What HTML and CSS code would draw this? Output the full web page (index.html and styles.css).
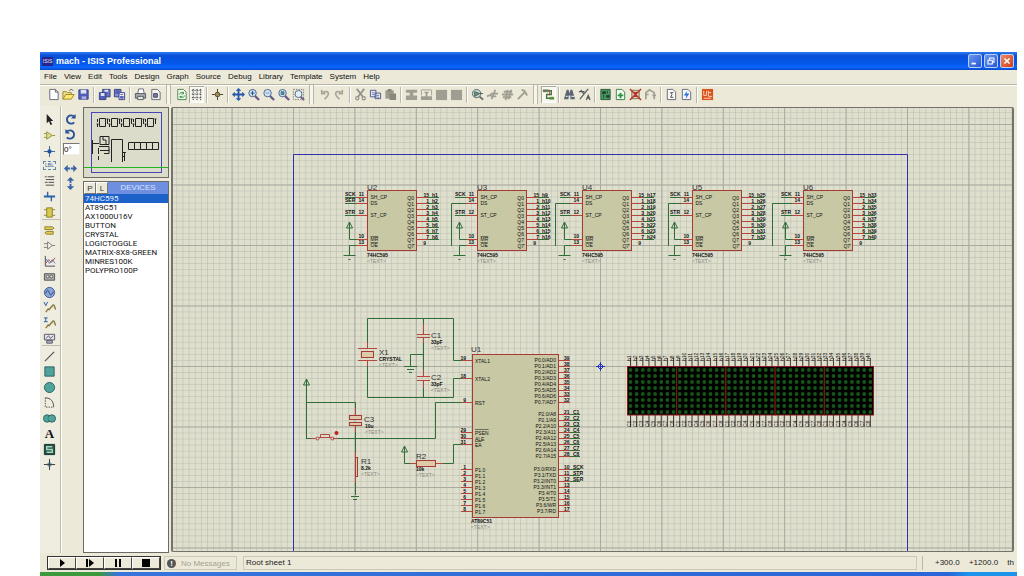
FILE: index.html
```html
<!DOCTYPE html>
<html lang="en">
<head>
<meta charset="utf-8">
<title>mach - ISIS Professional</title>
<link rel="stylesheet" href="styles.css">
</head>
<body>
<div class="window">
  <header class="titlebar">
    <span class="app-icon">ISIS</span>
    <h1 class="title">mach - ISIS Professional</h1>
    <button class="win-btn" aria-label="Minimize"><svg viewBox="0 0 14 14"><path d="M3 10h5" stroke="#fff" stroke-width="2"/></svg></button>
    <button class="win-btn" aria-label="Restore"><svg viewBox="0 0 14 14"><path d="M5.500 5.500V3.500h5v5h-2M3.500 6h5v4.500h-5z" fill="none" stroke="#fff" stroke-width="1.200"/></svg></button>
    <button class="win-btn win-close" aria-label="Close"><svg viewBox="0 0 14 14"><path d="M4 4l6 6M10 4l-6 6" stroke="#fff" stroke-width="1.800"/></svg></button>
  </header>
  <nav class="menubar">
    <a href="#">File</a><a href="#">View</a><a href="#">Edit</a><a href="#">Tools</a><a href="#">Design</a><a href="#">Graph</a><a href="#">Source</a><a href="#">Debug</a><a href="#">Library</a><a href="#">Template</a><a href="#">System</a><a href="#">Help</a>
  </nav>
  <div class="toolbar">
    <button aria-label="New"><svg viewBox="0 0 14 14"><path d="M3 1.500h6l3 3v8H3z" fill="#fff" stroke="#667"/><path d="M9 1.500v3h3" fill="none" stroke="#667"/></svg></button>
    <button aria-label="Open"><svg viewBox="0 0 14 14"><path d="M1 12V4h4l1 1h4v2" fill="#f3e08a" stroke="#9a8430"/><path d="M1 12l3-5h9l-3 5z" fill="#ffe76e" stroke="#9a8430"/><path d="M8 3c1-2 3-2 4 0" fill="none" stroke="#555"/></svg></button>
    <button aria-label="Save"><svg viewBox="0 0 14 14"><path d="M2 2h10v10H2z" fill="#5360b8" stroke="#353f86"/><path d="M4 2h6v4H4z" fill="#dde2f4"/><path d="M5 9h5v3H5z" fill="#aab2dc"/></svg></button>
    <i class="sep"></i>
    <button aria-label="Import"><svg viewBox="0 0 14 14"><path d="M5 1.500h8v8H5z" fill="#6874c2" stroke="#353f86"/><path d="M1.500 5h7v7.500h-7z" fill="#5360b8" stroke="#353f86"/><path d="M3 5.500h4v3H3zM7 2h4v2H7z" fill="#dde2f4"/></svg></button>
    <button aria-label="Export"><svg viewBox="0 0 14 14"><path d="M1.500 1.500h7v8h-7z" fill="#8791d2" stroke="#353f86"/><path d="M6.500 5h6v7.500h-6z" fill="#fff" stroke="#353f86"/><path d="M3 3h4v3H3zM8 7h3M8 9h3v2H8z" fill="#5360b8" stroke="#5360b8"/></svg></button>
    <i class="sep"></i>
    <button aria-label="Print"><svg viewBox="0 0 14 14"><path d="M4 6l1-5h5l1 5" fill="#fff" stroke="#667"/><path d="M1.500 6h11v5h-11z" fill="#a5aaa8" stroke="#556"/><path d="M4 9h6v3.500H4z" fill="#dff0dd" stroke="#556"/></svg></button>
    <button aria-label="Print area"><svg viewBox="0 0 14 14"><path d="M3 1.500h6l3 3v8H3z" fill="#f4f4ee" stroke="#667"/><path d="M5 6h4v4H5z" fill="#7580aa" stroke="#445"/></svg></button>
    <i class="gripsep"></i>
    <button aria-label="Redraw"><svg viewBox="0 0 14 14"><path d="M3 1.500h6l3 3v8H3z" fill="#f8fff5" stroke="#4d7c50"/><path d="M5 7c0-3 4-3 4-1M10 8c0 3-4 3-4.500 1M9 4v2.500H7M5.500 11V9H8" fill="none" stroke="#2b8d3a"/></svg></button>
    <button class="pressed" aria-label="Grid"><svg viewBox="0 0 14 14"><path d="M2 2.500h11M2 6.500h11M2 10.500h11M3.500 1v12M7.500 1v12M11.500 1v12" stroke="#333" stroke-dasharray="1.500 1.200"/></svg></button>
    <i class="sep"></i>
    <button aria-label="Origin"><svg viewBox="0 0 14 14"><path d="M7 1v12M1 7h12" stroke="#40382a"/><circle cx="7" cy="7" r="2.500" fill="#9c8a50" stroke="#5c5130"/></svg></button>
    <i class="sep"></i>
    <button aria-label="Pan"><svg viewBox="0 0 14 14"><path d="M7 0l3 3H8v3h3V4l3 3-3 3V8H8v3h2l-3 3-3-3h2V8H3v2L0 7l3-3v2h3V3H4z" fill="#2459ad"/></svg></button>
    <button aria-label="Zoom in"><svg viewBox="0 0 14 14"><path d="M8.500 8.500L13 13" stroke="#6d5a86" stroke-width="2.400"/><circle cx="6" cy="5.500" r="4" fill="#cbe3f2" stroke="#4c6190"/><path d="M6 3v5M4 5.500h4" stroke="#24427c"/></svg></button>
    <button aria-label="Zoom out"><svg viewBox="0 0 14 14"><path d="M8.500 8.500L13 13" stroke="#6d5a86" stroke-width="2.400"/><circle cx="6" cy="5.500" r="4" fill="#cbe3f2" stroke="#4c6190"/><path d="M4 5.500h4" stroke="#8298b8"/></svg></button>
    <button aria-label="Zoom all"><svg viewBox="0 0 14 14"><path d="M8.500 8.500L13 13" stroke="#6d5a86" stroke-width="2.400"/><circle cx="6" cy="5.500" r="4" fill="#cbe3f2" stroke="#4c6190"/><path d="M4.500 4h3v3h-3z" fill="#5a92a0" stroke="#44707c"/></svg></button>
    <button aria-label="Zoom area"><svg viewBox="0 0 14 14"><path d="M1.500 1.500h11v11h-11z" fill="none" stroke="#777" stroke-dasharray="1.500 1.200"/><path d="M9 9l4 4" stroke="#6d5a86" stroke-width="2.200"/><circle cx="7" cy="6.500" r="3.800" fill="#e5f0f6" stroke="#4c6190"/></svg></button>
    <i class="gripsep"></i>
    <button aria-label="Undo"><svg viewBox="0 0 14 14"><path d="M4 2v4h4M4 6c4-4 8-2 7 1-.5 2-2 3-4 5" fill="none" stroke="#aaa698" stroke-width="1.800"/></svg></button>
    <button aria-label="Redo"><svg viewBox="0 0 14 14"><path d="M10 2v4H6M10 6C6 2 2 4 3 7c.5 2 2 3 4 5" fill="none" stroke="#aaa698" stroke-width="1.800"/></svg></button>
    <i class="sep"></i>
    <button aria-label="Cut"><svg viewBox="0 0 14 14"><path d="M3 1l7 9M11 1L4 10" stroke="#96938a" stroke-width="2"/><circle cx="3.500" cy="11" r="1.700" fill="none" stroke="#96938a" stroke-width="1.300"/><circle cx="10.500" cy="11" r="1.700" fill="none" stroke="#96938a" stroke-width="1.300"/></svg></button>
    <button aria-label="Copy"><svg viewBox="0 0 14 14"><path d="M1.500 2.500h6v7h-6zM6.500 5.500h6v6h-6z" fill="#e6ebf5" stroke="#45558a"/><path d="M3 5h3M3 7h3M8 8h3M8 10h3" stroke="#7480a4"/></svg></button>
    <button aria-label="Paste"><svg viewBox="0 0 14 14"><path d="M1.500 2.500h9v9h-9z" fill="#9d9a8e"/><path d="M4 1h4v3H4zM6 6h7v7H6z" fill="#8a877c"/></svg></button>
    <i class="sep"></i>
    <button aria-label="Block copy"><svg viewBox="0 0 14 14"><path d="M1 2h12v3H9v3h4v5H1V8h4V5H1z" fill="#a09e92"/></svg></button>
    <button aria-label="Block move"><svg viewBox="0 0 14 14"><path d="M1.500 2v6M12.500 2v6M2 2h10" stroke="#a09e92"/><path d="M4 4h6L8 6v3h5v4H1V9h5V6z" fill="#a09e92"/></svg></button>
    <button aria-label="Block rotate"><svg viewBox="0 0 14 14"><path d="M1 2h12v11H1z" fill="#a09e92"/></svg></button>
    <button aria-label="Block delete"><svg viewBox="0 0 14 14"><path d="M1 2h12v11H1z" fill="#a09e92"/></svg></button>
    <i class="sep"></i>
    <button aria-label="Pick parts"><svg viewBox="0 0 14 14"><path d="M9 9l4 3.500" stroke="#666" stroke-width="2"/><circle cx="6" cy="6" r="4.500" fill="#c4d4cf" stroke="#5a6a70"/><path d="M4 4l5 2-5 3zM9 6h4" fill="#789486" stroke="#446050"/></svg></button>
    <button aria-label="Make device"><svg viewBox="0 0 14 14"><path d="M1 9l5-2M5 6h8M5 9h6M10 2L6 12" stroke="#a09e92" stroke-width="1.800"/></svg></button>
    <button aria-label="Packaging"><svg viewBox="0 0 14 14"><path d="M1 7h12M2 10h9M5 13l2-11M8 12l3-10M3 4h9" stroke="#a09e92" stroke-width="2"/></svg></button>
    <button aria-label="Decompose"><svg viewBox="0 0 14 14"><path d="M2 12l8-8M6 2l3 1 3 5" fill="none" stroke="#a09e92" stroke-width="2"/></svg></button>
    <i class="gripsep"></i>
    <button class="pressed" aria-label="Wire autorouter"><svg viewBox="0 0 14 14"><path d="M1 3h9v4H5v4h8" fill="none" stroke="#447440" stroke-width="1.500"/><path d="M1 1.500h6v3H1z" fill="#6a7d59"/><path d="M8 9.500h5v3H8z" fill="#55943d"/><path d="M8 2v6" stroke="#b24c38"/></svg></button>
    <i class="sep"></i>
    <button aria-label="Search"><svg viewBox="0 0 14 14"><path d="M4 2h2l1 4 1-4h2l3 10H8V8H6v4H1z" fill="#5a6474"/><path d="M3 9h2M9 9h3" stroke="#d5dde5" stroke-width="1.500"/></svg></button>
    <button aria-label="Property assignment"><svg viewBox="0 0 14 14"><path d="M2 12L11 1M1 4h6M3 2l3 4M9 13l2-5 2 5M9 11h4" fill="none" stroke="#555b60" stroke-width="1.300"/></svg></button>
    <i class="sep"></i>
    <button aria-label="Design explorer"><svg viewBox="0 0 14 14"><path d="M2 1.500h10v11H2z" fill="#4d9c62" stroke="#29513a"/><path d="M4 4h3v2H4zM8 8h3v2H8zM5 7v4M9 3v3" fill="#1c4530" stroke="#1c4530"/></svg></button>
    <button aria-label="New sheet"><svg viewBox="0 0 14 14"><path d="M2.500 1.500h6l3 3v8h-9z" fill="#f2fff0" stroke="#3d7a48"/><path d="M7 5v6M4 8h6" stroke="#2c9440" stroke-width="2"/></svg></button>
    <button aria-label="Remove sheet"><svg viewBox="0 0 14 14"><path d="M3 2.500h8v9H3z" fill="#ecc6b8" stroke="#775"/><path d="M1 1l12 12M13 1L1 13M4 5h6M4 9h6" stroke="#b53428" stroke-width="1.500"/></svg></button>
    <button aria-label="Exit to parent"><svg viewBox="0 0 14 14"><path d="M2 12V5l4-3 5 3v7M2 7h3M9 8h4" fill="none" stroke="#a09e92" stroke-width="1.800"/></svg></button>
    <i class="sep"></i>
    <button aria-label="Bill of materials"><svg viewBox="0 0 14 14"><path d="M2.500 1.500h6l3 3v8h-9z" fill="#fafaf4" stroke="#667"/><path d="M9 5H6l1.500 2L6 10h3" fill="none" stroke="#445"/></svg></button>
    <button aria-label="Electrical check"><svg viewBox="0 0 14 14"><path d="M2.500 1.500h6l3 3v8h-9z" fill="#f1f8ff" stroke="#667"/><path d="M8 3L4 8h3l-1 4 4-6H7z" fill="#2b72cf"/></svg></button>
    <i class="sep"></i>
    <button aria-label="Netlist to ARES"><svg viewBox="0 0 14 14"><path d="M1 1h12v12H1z" fill="#d9531f"/><path d="M3 3v5h3V3M8 3v6h4M8 5h3M3 11h8" fill="none" stroke="#ffd8b8"/></svg></button>
  </div>
  <main class="work">
    <div class="modes">
      <div class="group g-a">
        <button aria-label="Selection"><svg viewBox="0 0 14 14"><path d="M4 1v10l2.500-2 1.500 4 2-1-2-3.500h3z" fill="#222"/></svg></button>
        <button aria-label="Component"><svg viewBox="0 0 14 14"><path d="M4 3l6 4-6 4z" fill="#dede88" stroke="#938f38"/><path d="M1 5h3M1 9h3M10 7h3" stroke="#938f38"/></svg></button>
        <button aria-label="Junction"><svg viewBox="0 0 14 14"><path d="M7 1v12M1 7h12" stroke="#37608f"/><circle cx="7" cy="7" r="2.300" fill="#1c52a0"/></svg></button>
        <button class="lbl" aria-label="Wire label">LBL</button>
        <button aria-label="Text script"><svg viewBox="0 0 14 14"><path d="M2 3h2M5 3h7M3 6h9M2 9h3M6 9h6M3 12h9" stroke="#444"/></svg></button>
        <button aria-label="Bus"><svg viewBox="0 0 14 14"><path d="M1 7h12" stroke="#2766ac" stroke-width="2.200"/><path d="M5 7V2M9 7v5" stroke="#2766ac" stroke-width="1.500"/></svg></button>
        <button aria-label="Subcircuit"><svg viewBox="0 0 14 14"><path d="M4 2h6v10H4z" fill="#d8c850" stroke="#8c8126"/><path d="M1 4h3M1 10h3M10 4h3M10 10h3" stroke="#8c8126"/></svg></button>
      </div>
      <div class="group g-b">
        <button aria-label="Terminals"><svg viewBox="0 0 14 14"><path d="M2 3h8l2 1.500L10 6H2zM4 8h7v3H4l-2-1.500z" fill="#dccd5c" stroke="#8c8126"/></svg></button>
        <button aria-label="Device pins"><svg viewBox="0 0 14 14"><path d="M5 3l5 4-5 4zM1 5h4M1 9h4M10 7h3" fill="#f4f3ec" stroke="#777"/></svg></button>
        <button aria-label="Graph"><svg viewBox="0 0 14 14"><path d="M2.500 1v11H13" fill="none" stroke="#445"/><path d="M3 9l3-4 3 3 4-5" fill="none" stroke="#b04040"/><path d="M3 4l4 5 3-4 3 4" fill="none" stroke="#5076a8"/></svg></button>
        <button aria-label="Tape"><svg viewBox="0 0 14 14"><path d="M1.500 4h11v7h-11z" fill="#aaa" stroke="#555"/><circle cx="5" cy="7" r="1.500" fill="#eee" stroke="#555"/><circle cx="9" cy="7" r="1.500" fill="#eee" stroke="#555"/></svg></button>
        <button aria-label="Generator"><svg viewBox="0 0 14 14"><circle cx="7" cy="7" r="5.500" fill="#8da6d3" stroke="#3c528c"/><path d="M3 8c2-6 3-3 4 0s3 1 4-2" fill="none" stroke="#223a80"/></svg></button>
        <button aria-label="Voltage probe"><svg viewBox="0 0 14 14"><path d="M1 1l2 4 2-4" fill="none" stroke="#24549c"/><path d="M3 12l3-4M6 10l5-6M11 4c2 0 1 4 3 5" fill="none" stroke="#8c7d45" stroke-width="1.600"/></svg></button>
        <button aria-label="Current probe"><svg viewBox="0 0 14 14"><path d="M1 1h4M3 1v4M1 5h4" fill="none" stroke="#24549c"/><path d="M3 12l3-4M6 10l5-6M11 4c2 0 1 4 3 5" fill="none" stroke="#8c7d45" stroke-width="1.600"/></svg></button>
        <button aria-label="Instruments"><svg viewBox="0 0 14 14"><path d="M1.500 2.500h11v6h-11z" fill="#e2e8ee" stroke="#556"/><path d="M3 7l3-3 2 3 3-3" fill="none" stroke="#556"/><path d="M4 9h6v3H4z" fill="#aab" stroke="#556"/></svg></button>
      </div>
      <div class="group g-c">
        <button aria-label="Line"><svg viewBox="0 0 14 14"><path d="M2 12L12 2" stroke="#555" stroke-width="1.300"/></svg></button>
        <button aria-label="Box"><svg viewBox="0 0 14 14"><path d="M2 2h10v10H2z" fill="#4fa39d" stroke="#2e5f60"/></svg></button>
        <button aria-label="Circle"><svg viewBox="0 0 14 14"><circle cx="7" cy="7" r="5.500" fill="#4fa39d" stroke="#2e5f60"/></svg></button>
        <button aria-label="Arc"><svg viewBox="0 0 14 14"><path d="M2.500 2c6 0 9 4 9 10" fill="none" stroke="#444"/><path d="M2.500 2v10h9" fill="none" stroke="#444" stroke-dasharray="1.500 1.200"/></svg></button>
        <button aria-label="Path"><svg viewBox="0 0 14 14"><circle cx="4.500" cy="7" r="4" fill="#4fa39d" stroke="#2e5f60"/><circle cx="9.500" cy="7" r="4" fill="#4fa39d" stroke="#2e5f60"/><path d="M5 6h4v2H5z" fill="#4fa39d"/></svg></button>
        <button class="glyph-a" aria-label="Text">A</button>
        <button aria-label="Symbol"><svg viewBox="0 0 14 14"><path d="M1.500 1.500h11v11h-11z" fill="#245348" stroke="#152f2a"/><path d="M10 4H4v3h6v3H4" fill="none" stroke="#a6d8c0" stroke-width="1.500"/></svg></button>
        <button aria-label="Marker"><svg viewBox="0 0 14 14"><path d="M7 1v12M1 7h12" stroke="#333"/><circle cx="7" cy="7" r="2" fill="none" stroke="#37708c"/></svg></button>
      </div>
    </div>
    <div class="orient">
      <button aria-label="Rotate clockwise"><svg viewBox="0 0 14 14"><path d="M11 10a4.500 4.500 0 1 1 0-6" fill="none" stroke="#2a5298" stroke-width="2"/><path d="M12.500 1v5h-5z" fill="#2a5298"/></svg></button>
      <button aria-label="Rotate anticlockwise"><svg viewBox="0 0 14 14"><path d="M3 10a4.500 4.500 0 1 0 0-6" fill="none" stroke="#2a5298" stroke-width="2"/><path d="M1.500 1v5h5z" fill="#2a5298"/></svg></button>
      <input class="angle" aria-label="Rotation angle" value="0°">
      <button class="mirror" aria-label="Mirror horizontally"><svg viewBox="0 0 14 14"><path d="M0 7l4-4v3h6V3l4 4-4 4V8H4v3z" fill="#3b64a4"/><path d="M7 5v4" stroke="#dde"/></svg></button>
      <button aria-label="Mirror vertically"><svg viewBox="0 0 14 14"><path d="M7 0l4 4H8v6h3l-4 4-4-4h3V4H3z" fill="#3b64a4"/><path d="M5 7h4" stroke="#dde"/></svg></button>
    </div>
    <aside class="side">
      <div class="preview">
        <svg viewBox="0 0 84 69" role="img" aria-label="Sheet overview">
          <rect x="7.500" y="4.500" width="70" height="60" fill="none" stroke="#4646b8"/>
          <g fill="none" stroke="#222" id="mini"></g>
          <path d="M0 59.500h84" stroke="#22b422"/>
        </svg>
      </div>
      <div class="picker">
        <div class="picker-head"><button>P</button><button>L</button><span>DEVICES</span></div>
        <ul class="devices">
          <li class="selected">74HC595</li><li>AT89C51</li><li>AX1000U16V</li><li>BUTTON</li><li>CRYSTAL</li><li>LOGICTOGGLE</li><li>MATRIX-8X8-GREEN</li><li>MINRES100K</li><li>POLYPRO100P</li>
        </ul>
      </div>
    </aside>
    <section class="canvas">
      <svg class="schematic" role="img" aria-label="Root sheet schematic">
        <defs>
          <pattern id="minor" x="600" y="366" width="6.140" height="6.050" patternUnits="userSpaceOnUse"><path d="M0 0H7M0 0V7" class="grid-minor"/></pattern>
          <pattern id="major" x="600" y="366" width="61.400" height="60.500" patternUnits="userSpaceOnUse"><path d="M.5 0V61M0 .5H62" class="grid-major"/></pattern>
        </defs>
        <g transform="translate(-173 -108)">
          <rect x="172" y="108" width="3000" height="2000" fill="url(#minor)"/>
          <rect x="172" y="108" width="3000" height="2000" fill="url(#major)"/>
          <path d="M293.500 2000V154.500H907.500V2000" class="frame"/>
          <g id="sheet"></g>
        </g>
      </svg>
    </section>
  </main>
  <footer class="status">
    <div class="sim">
      <button aria-label="Play"><svg viewBox="0 0 14 10"><path d="M5 1l5 4-5 4z"/></svg></button>
      <button aria-label="Step"><svg viewBox="0 0 14 10"><path d="M3 1h2v8H3zM6 1l5 4-5 4z"/></svg></button>
      <button aria-label="Pause"><svg viewBox="0 0 14 10"><path d="M4 1h2v8H4zM8 1h2v8H8z"/></svg></button>
      <button aria-label="Stop"><svg viewBox="0 0 14 10"><path d="M3 1h8v8H3z"/></svg></button>
    </div>
    <div class="messages"><span class="info">!</span>No Messages</div>
    <div class="sheet-name">Root sheet 1</div>
    <div class="coords"><span>+300.0</span><span>+1200.0</span><span>th</span></div>
  </footer>
  <div class="taskbar"></div>
</div>
<script src="schematic.js"></script>
</body>
</html>
```
FILE: styles.css
```css
* { box-sizing: border-box; }
body { margin: 0; background: #fff; font-family: "Liberation Sans", Arial, sans-serif; font-size: 8px; color: #111; }
button { margin: 0; padding: 0; border: 0; background: none; font: inherit; color: inherit; }
svg { display: block; }
.window { display: flex; flex-direction: column; height: 100vh; padding: 52px 7px 0 40px; }

.titlebar { display: flex; align-items: center; gap: 2px; height: 18px; flex: none; padding: 0 3px 0 2px; background: linear-gradient(#2f7df0, #0a50d8 20%, #0458ea 65%, #0a66ff 85%, #0747c4); color: #fff; }
.app-icon { width: 11px; height: 9px; background: #26268c; color: #e8e8ff; font-size: 5px; line-height: 9px; text-align: center; }
.title { flex: 1; margin: 0; padding-left: 1px; font-size: 9px; line-height: 18px; }
.win-btn { width: 14px; height: 14px; border: 1px solid #b9cdf7; border-radius: 2px; background: linear-gradient(135deg, #6a96f4, #2557d2); }
.win-close { background: linear-gradient(135deg, #ef8a68, #cf3c18); }

.menubar { display: flex; align-items: center; gap: 7px; height: 14px; flex: none; padding-left: 4px; background: #ece9d8; }
.menubar a { color: #111; text-decoration: none; line-height: 12px; }

.toolbar { display: flex; align-items: center; height: 22px; flex: none; padding: 0 0 2px 6px; background: #ece9d8; border-top: 1px solid #b8b5a4; box-shadow: inset 0 1px #fff; }
.toolbar button { width: 15px; height: 17px; flex: none; padding: 2px 1px; }
.toolbar svg, .modes svg, .orient svg { width: 13px; height: 13px; }
.toolbar .pressed { background: #f8f7f0; box-shadow: inset 1px 1px #aaa797, inset -1px -1px #fff; }
.sep { width: 2px; height: 16px; margin: 0 2px; flex: none; border-left: 1px solid #bab7a6; border-right: 1px solid #fff; }
.gripsep { width: 5px; height: 19px; margin: 0 3px; flex: none; border-left: 1px solid #bab7a6; border-right: 1px solid #bab7a6; background: #f8f6ec; }

.work { display: flex; flex: 1; min-height: 0; padding-right: 3px; background: #ece9d8; }
.modes { width: 21px; flex: none; padding: 7px 0 0 2px; border-right: 1px solid #bfbcac; background: #efece0; }
.group { display: flex; flex-direction: column; justify-content: space-between; padding: 0 1px; }
.group button { width: 13px; height: 13px; }
.g-a { height: 106px; }
.g-b { height: 126px; padding-top: 4px; border-top: 1px solid #bfbcac; }
.g-c { height: 126px; padding-top: 4px; border-top: 1px solid #bfbcac; }
.group .lbl { height: 9px; border: 1px dashed #5788b0; color: #275c98; font-size: 5px; line-height: 7px; }
.group .glyph-a { font: bold 13px/13px "Liberation Serif", serif; }
.orient { display: flex; flex-direction: column; align-items: flex-start; gap: 2px; width: 22px; flex: none; padding: 7px 0 0 1px; border-left: 1px solid #fff; }
.orient button { width: 13px; height: 13px; margin-left: 1px; }
.orient .angle { width: 17px; height: 12px; padding: 0; border: 1px solid #777; border-right-color: #eee; border-bottom-color: #eee; background: #fff; font: 8px "Liberation Sans", Arial, sans-serif; }
.orient .mirror { margin-top: 5px; }

.side { display: flex; flex-direction: column; gap: 3px; width: 86px; flex: none; padding-top: 1px; }
.preview { height: 71px; flex: none; border: 1px solid #6b6b66; background: #dcdccb; }
.preview svg { width: 100%; height: 100%; }
.picker { display: flex; flex-direction: column; flex: 1; min-height: 0; border: 1px solid #6b6b66; background: #fff; }
.picker-head { display: flex; height: 12px; flex: none; background: #6e8fe0; color: #dbe6ff; }
.picker-head button { width: 12px; border: 1px solid #fff; border-right-color: #777; border-bottom-color: #777; background: #ece9d8; color: #333; line-height: 9px; }
.picker-head span { flex: 1; line-height: 12px; text-align: center; }
.devices { margin: 0; padding: 0; list-style: none; font-family: Roboto, "Liberation Sans", sans-serif; }
.devices li { padding-left: 1px; line-height: 9px; white-space: nowrap; }
.devices .selected { background: #1d62c8; color: #e8f0ff; }

.canvas { flex: 1; min-width: 0; margin: 1px 0 1px 2px; overflow: hidden; border: 2px solid #73736c; border-width: 1px 2px 1px 2px; border-radius: 2px; background: #dfdfce; }
.schematic { width: 100%; height: 100%; }
.grid-minor { fill: none; stroke: #b8b8aa; stroke-width: 1; }
.grid-major { fill: none; stroke: #a9aaa0; stroke-width: 1; }
.frame { fill: none; stroke: #3030b0; stroke-width: 1; }
.schematic text { font-size: 5px; fill: #111; }
.schematic .ref { font-size: 8px; fill: #333; }
.schematic .val { font-weight: bold; }
.schematic .note { fill: #8a8a80; }
.schematic .over { text-decoration: overline; }
.schematic .end { text-anchor: end; }
.chip { fill: #c8c8a4; stroke: #a63a34; }
.part { fill: #dccaa8; stroke: #a63a34; }
.pin { fill: none; stroke: #b5473f; }
.wire { fill: none; stroke: #2f6e38; }
.panel { fill: #000; stroke: #8c1a1a; }
.led { fill: #155716; }
.dot { fill: #c0201c; }
.cursor { fill: none; stroke: #2434b8; }
.dlead { fill: none; stroke: #4a3a3a; }

.status { display: flex; align-items: center; height: 19px; flex: none; padding: 2px 3px 1px 7px; background: #ece9d8; color: #222; }
.sim { display: flex; height: 14px; border: 1px solid #333; }
.sim button { display: grid; place-items: center; width: 28px; border: 1px solid #fff; border-right-color: #444; border-bottom-color: #444; background: #ece9d8; }
.sim svg { width: 14px; height: 10px; }
.messages { display: flex; align-items: center; gap: 5px; width: 73px; height: 14px; margin-left: 3px; padding-left: 2px; border: 1px solid #ccc9b8; color: #a5a294; white-space: nowrap; }
.info { width: 9px; height: 9px; flex: none; border-radius: 5px; background: #555; color: #fff; font-weight: bold; line-height: 9px; text-align: center; }
.sheet-name { flex: 1; height: 14px; margin-left: 6px; padding-left: 2px; border: 1px solid #ccc9b8; line-height: 12px; }
.coords { display: flex; justify-content: space-between; width: 92px; height: 14px; margin-left: 5px; padding-left: 12px; border-left: 1px solid #bab7a6; line-height: 14px; }
.taskbar { height: 4px; flex: none; background: linear-gradient(90deg, #3c9a3c 6%, #3575dc 8%, #2a66d8 93%, #1c94ec 95%); }
```
FILE: schematic.js
```js
const NS = 'http://www.w3.org/2000/svg';
const sheet = document.getElementById('sheet');

function add(tag, attrs, text) {
  const el = document.createElementNS(NS, tag);
  for (const key in attrs) el.setAttribute(key, attrs[key]);
  if (text !== undefined) el.textContent = text;
  sheet.appendChild(el);
}
const path = (cls, d) => add('path', { class: cls, d });
const rect = (cls, x, y, width, height) => add('rect', { class: cls, x, y, width, height });
const label = (x, y, text, cls = '') => add('text', { x, y, class: cls }, text);

/* 74HC595 shift registers */
[['U2', 367, 0], ['U3', 477, 26], ['U4', 582, 27], ['U5', 692, 24], ['U6', 803, 31]].forEach(([ref, x, tap], n) => {
  const left = x + .5;
  rect('chip', left, 190.5, 49, 60);
  label(x, 190, ref, 'ref');
  label(left + 3, 199, 'SH_CP');
  label(left + 3, 205, 'DS');
  label(left + 3, 217, 'ST_CP');
  label(left + 3, 241, 'MR', 'over');
  label(left + 3, 247, 'OE', 'over');
  path('wire', `M${x - 22} 197.500h11M${x - 22} 215.500h11`);
  path('pin', `M${x - 11} 197.500h11M${x - 11} 203.500h11M${x - 11} 215.500h11M${x - 11} 239.500h11M${x - 11} 245.500h11`);
  [['11', 196], ['14', 202], ['12', 214], ['10', 238], ['13', 244]].forEach(([t, y]) => label(x - 3, y, t, 'end val'));
  label(x - 22, 196, 'SCK', 'val');
  label(x - 22, 214, 'STR', 'val');
  path('wire', tap ? `M${x - 11} 203.500H${x - tap + .5}V246` : `M${x - 11} 203.500h-11`);
  if (!tap) label(x - 22, 202, 'SER', 'val');
  const gx = x - 17.5;
  path('wire', `M${gx} 222l-3 6h6zv17.500h7`);
  path('wire', `M${x - 11} 245.500H${gx}V255.500M${gx - 6} 255.500h12M${gx - 1} 259.500h2`);
  for (let i = 0; i < 8; i++) {
    const y = 197.5 + 6 * i;
    label(x + 47, y + 2, 'Q' + i, 'end');
    path('pin', `M${x + 50} ${y}h11`);
    path('wire', `M${x + 61} ${y}h11`);
    label(x + 62, y - 1, i ? i : 15, 'end val');
    label(x + 65, y - 1, 'h' + (8 * n + i + 1), 'val');
  }
  label(x + 48, 248, "Q7'", 'end');
  label(x + 59, 245, '9', 'end val');
  label(x, 257, '74HC595', 'val');
  label(x, 263, '<TEXT>', 'note');
});

/* AT89C51 */
rect('chip', 472.5, 354.5, 86, 163);
label(471, 352, 'U1', 'ref');
[['XTAL1', 360.5, 19], ['XTAL2', 378.5, 18], ['RST', 402.5, 9], ['PSEN', 432.5, 29, 1], ['ALE', 438.5, 30], ['EA', 444.5, 31, 1]].forEach(([t, y, num, over]) => {
  label(475, y + 2, t, over ? 'over' : '');
  label(466, y - 1, num, 'end val');
  path('pin', `M461 ${y}h11`);
});
for (let i = 0; i < 8; i++) {
  const y = 469.5 + 6 * i;
  label(475, y + 2, 'P1.' + i);
  label(466, y - 1, i + 1, 'end val');
  path('pin', `M461 ${y}h11`);
}
const ports = [
  [360, i => 39 - i, i => `P0.${i}/AD${i}`, () => ''],
  [414, i => 21 + i, i => `P2.${i}/A${8 + i}`, i => 'C' + (i + 1)],
  [469, i => 10 + i, i => 'P3.' + i + '/' + ['RXD', 'TXD', 'INT0', 'INT1', 'T0', 'T1', 'WR', 'RD'][i], i => ['SCK', 'STR', 'SER'][i] || '']
];
ports.forEach(([top, num, name, net]) => {
  for (let i = 0; i < 8; i++) {
    const y = top + 6 * i;
    label(556, y + 2, name(i), 'end');
    path('pin', `M559 ${y + .5}h11`);
    label(564, y, num(i), 'val');
    if (net(i)) {
      path('wire', `M570 ${y + .5}h10`);
      label(573, y, net(i), 'val');
    }
  }
});
label(471, 523, 'AT89C51', 'val');
label(471, 529, '<TEXT>', 'note');

/* Oscillator */
path('wire', 'M367.500 342V318.500H453.500V360.500H462M367.500 366V397.500H453.500V378.500H462M423.500 318V324M423.500 343V370M423.500 388V397M423.500 354.500H410.500V366M404 366.500h13M407 369.500h7M409 372.500h3');
path('pin', 'M367.500 342V348M358 348.500h19M358 360.500h19M367.500 361V366M423.500 324V334M417 334.500h13M417 337.500h13M423.500 338V343M423.500 370V376M417 376.500h13M417 380.500h13M423.500 381V388');
rect('part', 361.500, 351.500, 12, 6);
label(379, 355, 'X1', 'ref'); label(379, 361, 'CRYSTAL', 'val'); label(379, 367, '<TEXT>', 'note');
label(431, 338, 'C1', 'ref'); label(431, 344, '33pF', 'val'); label(431, 350, '<TEXT>', 'note');
label(431, 380, 'C2', 'ref'); label(431, 386, '33pF', 'val'); label(431, 392, '<TEXT>', 'note');

/* Reset */
path('wire', 'M306.500 379l-3 6h6zM306.500 379V439M306.500 402.500H355.500V408M306.500 438.500H311M338 438.500H435.500V402.500H462M355.500 432V452M355.500 483V495M351 496.500h8M353 499.500h4');
path('pin', 'M355.500 408V415M355.500 426V432M355.500 452V457M355.500 476V483M311 438.500h5M333 438.500h5M319 437.500h12M320.500 437V434.500h9V437');
rect('part', 349.500, 415.500, 12, 4);
rect('part', 349.500, 422.500, 12, 3);
rect('part', 355.500, 457.500, 2, 19);
add('circle', { class: 'pin', cx: 317.5, cy: 438.5, r: 1.5 });
add('circle', { class: 'pin', cx: 332.5, cy: 438.5, r: 1.5 });
add('circle', { class: 'dot', cx: 336.5, cy: 433, r: 2 });
label(364, 422, 'C3', 'ref'); label(365, 428, '10u', 'val'); label(365, 434, '<TEXT>', 'note');
label(361, 464, 'R1', 'ref'); label(361, 470, '8.2k', 'val'); label(361, 476, '<TEXT>', 'note');

/* EA pull-up */
path('wire', 'M404.500 446l-3 6h6zM404.500 446V463.500H410M443 463.500H453.500V444.500H462');
path('pin', 'M410 463.500h6M436 463.500h7');
rect('part', 416.500, 460.500, 19, 6);
label(416, 459, 'R2', 'ref'); label(416, 471, '10k', 'val'); label(416, 477, '<TEXT>', 'note');

/* Origin marker */
path('cursor', 'M596 366.500h9M600.500 362v9M600.500 363.500l3 3-3 3-3-3z');

/* Five 8x8 LED matrices */
for (let c = 0; c < 40; c++) {
  const x = 630.5 + 6.15 * c;
  path('dlead', `M${x} 358v8M${x} 415v12`);
  add('text', { transform: `translate(${x} 361) rotate(-90)` }, 'h' + (c + 1));
  add('text', { transform: `translate(${x} 427) rotate(-90)` }, 'C' + (c % 8 + 1));
}
for (let m = 0; m < 5; m++) rect('panel', 627.5 + 49.2 * m, 366.5, 49.2, 48.5);
for (let c = 0; c < 40; c++) {
  for (let r = 0; r < 8; r++) add('circle', { class: 'led', cx: 630.5 + 6.15 * c, cy: 370 + 6 * r, r: 1.9 });
}

/* Overview thumbnail */
const mini = document.createElementNS(NS, 'path');
let d = 'M27.500 54V31.500H38.500V54M16 28.500h9v8h-9zM19 28v4h3v4M8.500 32v14M8 35.500h7M15 38.500h10v4h-9M14.500 40v6M14.500 48v4M20 45.500h5v-4M39 44.500h3M39 48.500h2M40.500 45v8';
for (let i = 0; i < 5; i++) d += `M${15.5 + 12 * i} 10.500h6v8h-6zM${13.5 + 12 * i} 11v3m-1 2h2m-1 0v3m9-8h2m-1 0v5`;
for (let i = 0; i < 5; i++) d += `M${44.5 + 6 * i} 34.500h6v7h-6z`;
mini.setAttribute('d', d);
document.getElementById('mini').appendChild(mini);
```
